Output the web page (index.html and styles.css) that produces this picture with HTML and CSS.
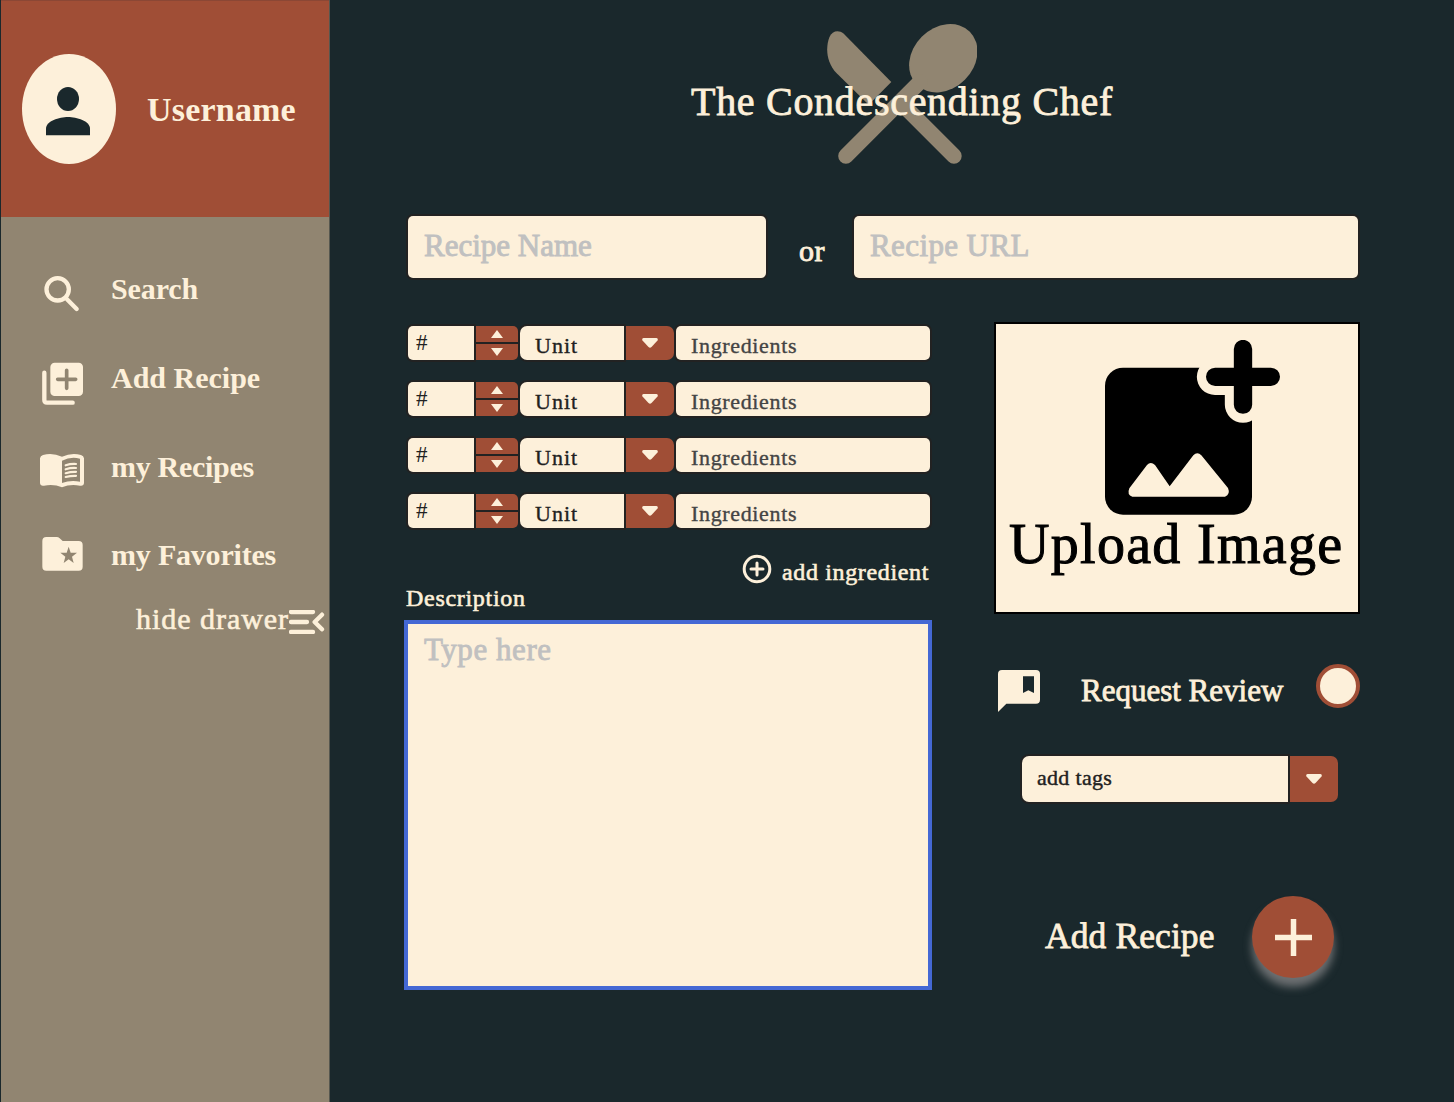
FILE: index.html
```html
<!DOCTYPE html>
<html lang="en">
<head>
<meta charset="utf-8">
<title>The Condescending Chef</title>
<link rel="stylesheet" href="styles.css">
</head>
<body>
<div class="app">
  <aside class="drawer">
    <div class="profile">
      <div class="avatar">
        <svg width="44" height="49" viewBox="138 261 132 147"><ellipse cx="204" cy="297" rx="33" ry="36"/><path d="M138 406V386C138 363 178 351 204 351S270 363 270 386V406Z"/></svg>
      </div>
      <span class="username">Username</span>
    </div>
    <nav class="menu">
      <a class="item"><svg class="item-icon" viewBox="120 63 132 132"><circle class="line" cx="173" cy="118" r="33.5"/><path class="line" d="M201 148L230 177"/></svg><span class="search">Search</span></a>
      <a class="item"><svg class="item-icon" viewBox="120 330 132 132"><rect x="151" y="338" width="98" height="100" rx="13"/><path class="line" d="M133 368V450Q133 458 141 458H218"/><path class="cut" d="M200 361V415M173 388H227"/></svg><span class="add">Add Recipe</span></a>
      <a class="item"><svg class="item-icon" viewBox="120 27 132 132"><path fill-rule="evenodd" d="M120 58Q121 51 129 48Q157 40 186 53Q215 40 243 48Q251 51 252 58V132Q251 142 240 140Q211 134 186 145Q161 134 132 140Q121 142 120 132ZM186 65V132Q212 122 240 128V59Q212 52 186 65Z"/><path class="rule" d="M197 79Q212 74 228 75M197 91Q212 86 228 87M197 102.500Q212 98 228 98.500M197 114Q212 110 228 110.500"/></svg><span class="recipes">my Recipes</span></a>
      <a class="item"><svg class="item-icon" viewBox="120 291 132 132"><path d="M139 291H170Q175 291 179 295L188 303H236Q248 303 248 315V380Q248 392 236 392H139Q127 392 127 380V303Q127 291 139 291Z"/><path class="star" d="M206 320L212 338H231L216 350L221 369L206 358L191 369L196 350L181 338H200Z"/></svg><span class="favorites">my Favorites</span></a>
    </nav>
    <a class="hide"><span>hide drawer</span><svg width="36" height="24" viewBox="867 510 108 72"><path class="line" d="M873 516H939M873 546H921M873 576H939M966 524L944 546L966 568"/></svg></a>
  </aside>

  <main class="page">
    <header class="brand">
      <svg class="logo" width="150" height="140" viewBox="827 24 150 140"><path d="M843.5 33.5L891.3 82L868.7 104.7L836.7 73.3C826 62 825.500 47 829.500 37C832 31 838.500 29.500 843.500 33.500Z"/><ellipse cx="943.3" cy="58.300" rx="37.500" ry="30.500" transform="rotate(-45 943.3 58.3)"/><path class="handle" d="M845.9 156L920 81.900M954 156L901 103"/></svg>
      <h1 class="title">The Condescending Chef</h1>
    </header>

    <div class="source">
      <div class="field name">Recipe Name</div>
      <span class="or">or</span>
      <div class="field url">Recipe URL</div>
    </div>

    <div class="columns">
      <section class="left">
        <div class="ingredients">
          <div class="row"><div class="cell count">#</div><div class="spin"><i><svg width="12" height="8"><path d="M6 0L12 8H0Z"/></svg></i><i><svg width="12" height="8"><path d="M0 0H12L6 8Z"/></svg></i></div><div class="cell unit">Unit</div><div class="drop"><svg width="16" height="10"><path d="M1.500 0H14.500Q16.500 .5 15.500 2.500L9.500 9Q8 10.500 6.500 9L.5 2.500Q-.5 .5 1.500 0Z"/></svg></div><div class="cell ingredient">Ingredients</div></div>
          <div class="row"><div class="cell count">#</div><div class="spin"><i><svg width="12" height="8"><path d="M6 0L12 8H0Z"/></svg></i><i><svg width="12" height="8"><path d="M0 0H12L6 8Z"/></svg></i></div><div class="cell unit">Unit</div><div class="drop"><svg width="16" height="10"><path d="M1.500 0H14.500Q16.500 .5 15.500 2.500L9.500 9Q8 10.500 6.500 9L.5 2.500Q-.5 .5 1.500 0Z"/></svg></div><div class="cell ingredient">Ingredients</div></div>
          <div class="row"><div class="cell count">#</div><div class="spin"><i><svg width="12" height="8"><path d="M6 0L12 8H0Z"/></svg></i><i><svg width="12" height="8"><path d="M0 0H12L6 8Z"/></svg></i></div><div class="cell unit">Unit</div><div class="drop"><svg width="16" height="10"><path d="M1.500 0H14.500Q16.500 .5 15.500 2.500L9.500 9Q8 10.500 6.500 9L.5 2.500Q-.5 .5 1.500 0Z"/></svg></div><div class="cell ingredient">Ingredients</div></div>
          <div class="row"><div class="cell count">#</div><div class="spin"><i><svg width="12" height="8"><path d="M6 0L12 8H0Z"/></svg></i><i><svg width="12" height="8"><path d="M0 0H12L6 8Z"/></svg></i></div><div class="cell unit">Unit</div><div class="drop"><svg width="16" height="10"><path d="M1.500 0H14.500Q16.500 .5 15.500 2.500L9.500 9Q8 10.500 6.500 9L.5 2.500Q-.5 .5 1.500 0Z"/></svg></div><div class="cell ingredient">Ingredients</div></div>
        </div>
        <a class="more"><svg width="30" height="30" viewBox="0 0 30 30"><circle cx="15" cy="15" r="12.800"/><path d="M15 9V21M9 15H21"/></svg><span>add ingredient</span></a>
        <div class="label">Description</div>
        <div class="description">Type here</div>
      </section>

      <section class="right">
        <div class="upload">
          <svg width="175" height="175" viewBox="360 75 525 525"><rect x="360" y="158" width="441" height="441" rx="54"/><path class="halo" d="M690 185.500H858M774 102V269"/><path class="plus" d="M690.500 185.500H857.500M774 102V269"/><path class="hills" d="M433 520L486 450Q497 438 510 450L554 514L625 421Q637 408 649 421L729 519Q737 538 720 545H442Q425 540 433 520Z"/></svg>
          <span>Upload Image</span>
        </div>
        <div class="review">
          <svg width="42" height="42" viewBox="39 60 126 126"><path fill-rule="evenodd" d="M51 60H153Q165 60 165 72V149Q165 161 153 161H64L39 186V72Q39 60 51 60ZM114 79V129L130 121L147 129V79Z"/></svg>
          <span>Request Review</span>
          <div class="radio"></div>
        </div>
        <div class="tags"><div class="cell tag">add tags</div><div class="drop"><svg width="16" height="10"><path d="M1.500 0H14.500Q16.500 .5 15.500 2.500L9.500 9Q8 10.500 6.500 9L.5 2.500Q-.5 .5 1.500 0Z"/></svg></div></div>
        <div class="submit">
          <span>Add Recipe</span>
          <div class="fab"><svg width="37" height="37" viewBox="0 0 37 37"><path d="M18.500 0V37M0 18.500H37"/></svg></div>
        </div>
      </section>
    </div>
  </main>
</div>
</body>
</html>
```
FILE: styles.css
```css
:root {
  --dark: #1a282c;
  --rust: #a04e36;
  --taupe: #918571;
  --cream: #fdf0da;
  --ink: #212121;
}

* { box-sizing: border-box; }

body {
  margin: 0;
  background: var(--dark);
  color: var(--cream);
  font-family: "Liberation Serif", serif;
  -webkit-text-stroke: .6px currentColor;
}

svg { display: block; flex: none; fill: var(--cream); }
span, h1 { white-space: nowrap; }

.line { fill: none; stroke: var(--cream); stroke-width: 13; stroke-linecap: round; stroke-linejoin: round; }

.app { display: flex; width: 1454px; height: 1102px; overflow: hidden; }

/* Drawer */
.drawer { width: 330px; padding-left: 1px; background: linear-gradient(var(--taupe), var(--taupe)) 1px 0 / 328.500px 100% no-repeat; }
.profile { display: flex; align-items: center; width: 328px; height: 217px; padding: 0 0 0 21px; background: var(--rust); border-top: 1px solid #8b4735; }
.avatar { display: flex; justify-content: center; width: 94px; height: 110px; padding-top: 33px; border-radius: 50%; background: var(--cream); }
.avatar svg { fill: var(--dark); margin-right: 2px; }
.username { margin-left: 31px; padding-top: 2px; font-size: 34px; font-weight: 700; letter-spacing: .2px; -webkit-text-stroke-width: 0; }

.menu { display: flex; flex-direction: column; gap: 44.700px; margin-top: 54px; padding-left: 39px; font-size: 30px; font-weight: 700; line-height: 36px; -webkit-text-stroke-width: 0; }
.item { display: flex; gap: 27px; height: 44px; }
.item-icon { width: 44px; height: 44px; overflow: visible; }
.cut { fill: none; stroke: var(--taupe); stroke-width: 11; stroke-linecap: round; }
.rule { fill: none; stroke: var(--cream); stroke-width: 6.500; stroke-linecap: round; }
.star { fill: var(--taupe); }
.search { letter-spacing: -.1px; }
.recipes { padding-top: 1px; letter-spacing: -.3px; }
.favorites { letter-spacing: -.2px; }
.hide { display: flex; justify-content: flex-end; gap: 0; margin-top: 25px; padding-right: 5px; font-size: 30px; line-height: 25px; letter-spacing: .95px; }
.hide svg { margin-top: 4px; }

/* Page */
.page { width: 1124px; padding: 24px 94px 0 78px; }
.brand { display: grid; place-items: center; height: 140px; padding-left: 36px; }
.logo, .title { grid-area: 1 / 1; }
.logo { fill: var(--taupe); }
.handle { fill: none; stroke: var(--taupe); stroke-width: 15.400; stroke-linecap: round; }
.title { margin: 16px 0 0; font-size: 40px; font-weight: 400; line-height: 46px; letter-spacing: .7px; z-index: 1; -webkit-text-stroke-width: .8px; }

.source { display: flex; height: 62px; margin-top: 52px; font-size: 31px; line-height: 36px; }
.field { padding: 12px 16px; border-radius: 5px; background: var(--cream); color: #c0c0c0; box-shadow: 0 0 0 2px #222; -webkit-text-stroke-width: .9px; }
.name { width: 358px; }
.url { width: 504px; letter-spacing: .4px; }
.or { width: 88px; padding: 18px 0 0 4px; text-align: center; font-size: 30px; line-height: 34px; letter-spacing: .6px; -webkit-text-stroke-width: .9px; }

.columns { display: grid; grid-template-columns: 522px 366px; gap: 64px; margin-top: 44px; }

/* Ingredients */
.ingredients { display: grid; gap: 22px; padding-top: 4px; }
.row { display: flex; gap: 2px; height: 34px; font-size: 22px; line-height: 26px; -webkit-text-stroke-width: .35px; }
.cell { background: var(--cream); color: var(--ink); box-shadow: 0 0 0 2px #222; }
.count { width: 66px; padding: 4px 8px 0; border-radius: 5px 0 0 5px; font-size: 23px; -webkit-text-stroke-width: 0; }
.spin { display: grid; gap: 2px; width: 42px; border-radius: 0 5px 5px 0; overflow: hidden; background: #222; }
.spin i { display: grid; place-items: center; background: var(--rust); }
.unit { width: 104px; padding: 7px 15px 0; border-radius: 7px 0 0 7px; letter-spacing: 1px; }
.drop { display: grid; place-items: center; width: 48px; border-radius: 0 7px 7px 0; background: var(--rust); }
.ingredient { width: 254px; padding: 7px 15px 0; border-radius: 5px; color: #444; letter-spacing: .65px; }
.more { display: flex; justify-content: flex-end; gap: 10px; height: 30px; margin-top: 26px; padding-right: 1px; font-size: 24px; line-height: 30px; letter-spacing: .65px; }
.more svg { fill: none; stroke: var(--cream); stroke-width: 3; stroke-linecap: round; }
.more span { padding-top: 3px; }
.label { margin-left: -2px; font-size: 24px; line-height: 28px; letter-spacing: .7px; }
.description { width: 528px; height: 370px; margin: 8px 0 0 -4px; padding: 8px 16px; border: 4px solid #4468d4; background: var(--cream); color: #c0c0c0; font-size: 31px; line-height: 36px; letter-spacing: .55px; -webkit-text-stroke-width: .8px; }

/* Image, review and tags */
.upload { height: 292px; padding: 16px 0 0 13px; border: 2px solid #000; background: var(--cream); color: #000; font-size: 56px; line-height: 59px; letter-spacing: 1.300px; -webkit-text-stroke-width: 1px; }
.upload svg { margin-left: 96px; fill: #000; }
.upload span { display: block; }
.halo, .plus { fill: none; stroke-linecap: round; }
.halo { stroke: var(--cream); stroke-width: 109; }
.plus { stroke: #000; stroke-width: 55; }
.hills { fill: var(--cream); }
.review { display: flex; height: 44px; margin-top: 50px; padding-left: 4px; font-size: 31px; line-height: 36px; }
.review svg { margin-top: 6px; }
.review span { width: 276px; padding: 9px 0 0 41px; -webkit-text-stroke-width: .8px; }
.radio { width: 44px; height: 44px; border: 4px solid var(--rust); border-radius: 50%; background: var(--cream); }
.tags { display: flex; gap: 2px; width: 316px; height: 46px; margin: 48px 0 0 28px; font-size: 22px; line-height: 26px; -webkit-text-stroke-width: .4px; }
.tag { width: 266px; padding: 9px 15px; border-radius: 7px 0 0 7px; letter-spacing: .3px; }
.submit { display: flex; justify-content: space-between; align-items: center; height: 82px; margin: 94px 26px 0 51px; font-size: 35.500px; letter-spacing: .1px; -webkit-text-stroke-width: .8px; }
.submit span { padding-bottom: 2px; }
.fab { display: grid; place-items: center; width: 82px; height: 82px; border-radius: 50%; background: var(--rust); box-shadow: 0 9px 9px #6d7072; }
.fab svg { stroke: var(--cream); stroke-width: 5.500; }
```
